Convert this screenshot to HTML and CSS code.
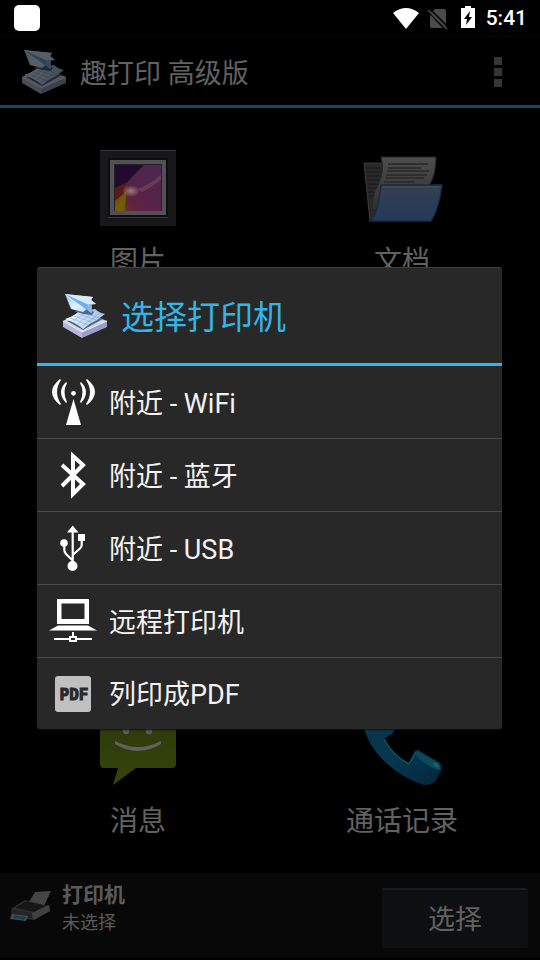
FILE: index.html
```html
<!DOCTYPE html>
<html lang="zh-CN">
<head>
<meta charset="utf-8">
<meta name="viewport" content="width=device-width, initial-scale=1">
<title>趣打印 高级版</title>
<link rel="stylesheet" href="styles.css">
</head>
<body>
<svg class="defs" aria-hidden="true">
  <defs>
    <linearGradient id="plane" x1="0" y1="0" x2="1" y2="1">
      <stop offset="0" stop-color="#8fbdf0"/><stop offset=".5" stop-color="#e4f3fd"/><stop offset="1" stop-color="#a9cff2"/>
    </linearGradient>
    <linearGradient id="sheet" x1="0" y1="0" x2="1" y2="0">
      <stop offset="0" stop-color="#eef6fc"/><stop offset="1" stop-color="#9cc3ea"/>
    </linearGradient>
    <symbol id="logo" viewBox="0 0 48 48">
      <path d="M2 29 21 19 46 29 21 41z" fill="#d3d7ec"/>
      <path d="M2 29 21 40V46L2 35z" fill="#b4b9d8"/>
      <path d="M46 29 21 40V46L46 35z" fill="#9a9fc8"/>
      <path d="M2 29 21 40 46 29" fill="none" stroke="#e9ecf8"/>
      <path d="M6 29 22 38 42 27 34 25z" fill="#5c6489"/>
      <path d="M4 27Q12 25 17 20L34 17Q38 21 44 22L36 28Q29 31 22 37Q14 30 4 27z" fill="url(#sheet)"/>
      <path d="M9 26 27 33M13 24 31 30M17 22 35 28M21 20 38 26M12 29 29 18M16 32 34 19M20 35 39 21" stroke="#7fa5cd" stroke-width=".5"/>
      <path d="M13 19 22 22 31 23 33 20 29 17z" fill="#4c6a90"/>
      <path d="M4 2 32 5 30 8 35 12 30 12 31 21 28 19 26 17 22 20 10 17z" fill="url(#plane)"/>
      <path d="M4 2 28 12 26 18z" fill="#78ace6"/>
      <path d="M4 2 32 5 30 8 35 12 28 13z" fill="#d5ebfb"/>
      <path d="M28 12 26 17 30 21 31 12z" fill="#8fb8e2"/>
      <path d="M4 2 22 19M7 8 16 18" stroke="#d9ecfb" stroke-width="1"/>
    </symbol>
  </defs>
</svg>

<div class="status">
  <span class="notice"></span>
  <svg class="wifi" viewBox="0 0 26 21" aria-hidden="true"><path d="M0 5Q13-5 26 5L13 21z" fill="#fff"/></svg>
  <svg class="sim" viewBox="0 0 20 21" aria-hidden="true">
    <path d="M7 1H16Q18 1 18 3V18Q18 20 16 20H4Q2 20 2 18V6z" fill="#4a4a4a"/>
    <path d="M1 4 18 22" stroke="#000" stroke-width="2"/><path d="M0 2 19 21" stroke="#4a4a4a" stroke-width="1.6"/><path d="M2 1 19 18" stroke="#000" stroke-width="1.6"/>
  </svg>
  <svg class="battery" viewBox="0 0 14 22" aria-hidden="true">
    <path d="M4 0H10V2H14V22H0V2H4z" fill="#fff"/><path d="M9 5 3 13H6L5 19 11 11H8z" fill="#000"/>
  </svg>
  <time>5:41</time>
</div>

<header class="bar">
  <svg class="logo" aria-hidden="true"><use href="#logo"/></svg>
  <h1>趣打印 高级版</h1>
  <button class="more" aria-label="更多选项"><i></i><i></i><i></i></button>
</header>

<main class="tiles">
  <a class="tile" href="#photos">
    <svg viewBox="0 0 76 76" aria-hidden="true">
      <defs>
        <linearGradient id="art" x1="0" y1="1" x2="1" y2="0">
          <stop offset="0" stop-color="#756209"/><stop offset=".22" stop-color="#613012"/><stop offset=".42" stop-color="#542347"/><stop offset="1" stop-color="#4c2752"/>
        </linearGradient>
        <radialGradient id="glow"><stop offset="0" stop-color="#a17c6d"/><stop offset="1" stop-color="#a17c6d" stop-opacity="0"/></radialGradient>
      </defs>
      <path d="M0 0H76V76H0z" fill="#18181b"/><path d="M0 .5H76" stroke="#343436"/>
      <path d="M8 8H68V68H8z" fill="#0e0e11"/><path d="M8 67.5H68" stroke="#3b3b3b"/>
      <path d="M10 10H66V65H10z" fill="#515153"/><path d="M14 14H62V61H14z" fill="#27212c"/>
      <path d="M15 15H61V61H15z" fill="url(#art)"/>
      <path d="M15 15H44L31 28 20 41 15 50z" fill="#210a31"/>
      <path d="M15 38 27 32 20 50 15 58z" fill="#591a17"/>
      <path d="M15 51 27 41 24 61H15z" fill="#756209" opacity=".8"/>
      <path d="M27 41Q37 33 44 43L61 61H26z" fill="#5f214c" opacity=".7"/>
      <path d="M38 39Q47 36 61 25V30Q50 38 42 42z" fill="#744456" opacity=".7"/>
      <ellipse cx="31" cy="41" rx="9" ry="6" fill="url(#glow)"/>
    </svg>
    <span>图片</span>
  </a>
  <a class="tile" href="#documents">
    <svg viewBox="0 0 76 76" aria-hidden="true">
      <defs><linearGradient id="folder" x1="0" y1="0" x2="0" y2="1"><stop offset="0" stop-color="#35404e"/><stop offset="1" stop-color="#223a5d"/></linearGradient>
      <linearGradient id="paper" x1="0" y1="0" x2="0" y2="1"><stop offset="0" stop-color="#4d4d4d"/><stop offset="1" stop-color="#303030"/></linearGradient></defs>
      <path d="M0 13H20V60L6 71z" fill="#292929" stroke="#393939"/>
      <path d="M2 18H17M2 22H17M3 26H16M3 30H15M3 34H14M4 38H13M4 42H12M4 46H11" stroke="#191919"/>
      <path d="M17 7H72Q72 24 66 34L20 60H8Q8 45 14 35 21 21 17 7z" fill="url(#paper)" stroke="#262626"/>
      <path d="M24 14H64M24 18H57M23 21H65M22 25H63M21 28H60M20 32H51" stroke="#292929" stroke-width="1.3"/>
      <path d="M17 35H78Q75 59 67 71H6Q14 65 17 35z" fill="url(#folder)" stroke="#172b46" stroke-width="1.4"/>
      <path d="M19 37H75" stroke="#465365"/>
    </svg>
    <span>文档</span>
  </a>
  <a class="tile" href="#messages">
    <svg viewBox="0 0 76 76" aria-hidden="true">
      <defs><linearGradient id="bubble" x1="0" y1="0" x2="0" y2="1"><stop offset=".2" stop-color="#2e3b0b"/><stop offset="1" stop-color="#35450b"/></linearGradient></defs>
      <path d="M4 4H72Q76 4 76 8V54Q76 58 72 58H36L13 75 18 58H4Q0 58 0 54V8Q0 4 4 4z" fill="url(#bubble)"/>
      <circle cx="26" cy="21" r="3.2" fill="#5c5c5c"/><circle cx="49" cy="21" r="3.2" fill="#5c5c5c"/>
      <path d="M15 31Q38 43 61 31V34Q38 48 15 34z" fill="#606060"/>
    </svg>
    <span>消息</span>
  </a>
  <a class="tile" href="#calls">
    <svg viewBox="0 0 76 76" aria-hidden="true">
      <defs><linearGradient id="phone" x1="0" y1="0" x2="1" y2="1"><stop offset="0" stop-color="#063448"/><stop offset=".5" stop-color="#07374f"/><stop offset="1" stop-color="#032640"/></linearGradient></defs>
      <path d="M2 4 22 2 31 19 29 23 20 29Q28 45 45 53L51 41Q53 39 56 41L76 53Q79 56 77 60L73 69Q69 75 60 75 37 68 18 49 5 35 0 19z" fill="url(#phone)"/>
      <path d="M53 41 75 53 77 60Q65 59 52 46z" fill="#0a4a5a"/>
      <path d="M20 29Q29 46 45 54L52 42" fill="none" stroke="#0c5060" stroke-width="1.6"/>
      <ellipse cx="72" cy="55" rx="3" ry="1.6" transform="rotate(35 72 55)" fill="#25646c"/>
    </svg>
    <span>通话记录</span>
  </a>
</main>

<footer class="printer">
  <svg class="device" viewBox="0 0 48 48" aria-hidden="true">
    <path d="M29 10 45 9 37 26 23 20z" fill="#454545"/>
    <path d="M5 27 19 18 43 24 44 29 27 38 5 34z" fill="#303030"/>
    <path d="M9 26 20 19 40 24 28 30z" fill="#171717"/>
    <path d="M5 27 26 31V37L5 33z" fill="#242424"/>
    <path d="M26 31 43 23 44 29 28 38z" fill="#414141"/>
    <path d="M6 32 22 34 20 39 4 37z" fill="#4a4f53"/><path d="M8 33 20 35 18 38 7 36z" fill="#173c5d"/><path d="M13 34 17 35 15 37 12 36z" fill="#23482d"/>
  </svg>
  <div class="state"><strong>打印机</strong><span>未选择</span></div>
  <button class="choose">选择</button>
</footer>

<div class="overlay">
  <section class="dialog" role="dialog" aria-labelledby="dialog-title">
    <div class="heading">
      <svg class="logo" aria-hidden="true"><use href="#logo"/></svg>
      <h2 id="dialog-title">选择打印机</h2>
    </div>
    <ul>
      <li><button>
        <svg viewBox="0 0 48 48" fill="#fff" aria-hidden="true">
          <circle cx="24.5" cy="15.3" r="2.4"/><path d="M24.5 21 32 47H17z"/>
          <path d="M17 4Q7 14 17 25L18 24Q13 14 18 5zM11 1Q-5 14 11 27L12 26Q4 14 12 2zM32 4Q42 14 32 25L31 24Q36 14 31 5zM38 1Q54 14 38 27L37 26Q45 14 37 2z"/>
        </svg><span>附近 - WiFi</span></button></li>
      <li><button>
        <svg viewBox="0 0 48 48" aria-hidden="true"><path d="M13 14 34 33 24 43V5L34 14 13 35" fill="none" stroke="#fff" stroke-width="4"/></svg><span>附近 - 蓝牙</span></button></li>
      <li><button>
        <svg viewBox="0 0 48 48" fill="#fff" aria-hidden="true">
          <path d="M23.700 1.500 29.500 8.500H18zM29 10H36V17H29z"/><circle cx="15" cy="19" r="3.800"/><circle cx="23.500" cy="42" r="5"/>
          <path d="M23.700 7V40M15.300 21V26Q15.300 28 17 30L23.700 36.500M32.700 16V21Q32.700 23 31 24.500L23.700 31" fill="none" stroke="#fff" stroke-width="2.200"/>
        </svg><span>附近 - USB</span></button></li>
      <li><button>
        <svg viewBox="0 0 48 48" fill="#fff" aria-hidden="true">
          <path fill-rule="evenodd" d="M8 2H40V27H8zM12.500 6.500V22H35.500V6.500zM9 28.500H39L48 33.500H0z"/>
          <path fill-rule="evenodd" d="M5 41H20V39H23V35H25V39H28V41H43V43H28V45H20V43H5zM22 41V43H26V41z"/>
        </svg><span>远程打印机</span></button></li>
      <li><button>
        <svg viewBox="0 0 48 48" aria-hidden="true"><rect x="6" y="6" width="36" height="36" rx="3" fill="#c0c0c0"/><text class="pdf" x="25" y="30" text-anchor="middle">PDF</text></svg><span>列印成PDF</span></button></li>
    </ul>
  </section>
</div>
</body>
</html>
```
FILE: styles.css
```css
* { box-sizing: border-box; }

body {
  margin: 0;
  min-height: 100vh;
  display: flex;
  flex-direction: column;
  position: relative;
  background: #000;
  color: #626262;
  font-family: Roboto, "Noto Sans CJK SC", sans-serif;
  font-size: 27px;
}

h1, h2 { margin: 0; font-size: 27px; font-weight: 400; }
svg { display: block; flex: none; overflow: visible; }
button { border: 0; padding: 0; background: none; color: inherit; font: inherit; }
.defs { position: absolute; width: 0; height: 0; }
.logo { width: 48px; height: 48px; }

.status {
  height: 36px;
  padding: 0 13px 0 14px;
  display: flex;
  align-items: center;
  color: #fff;
  font-size: 21px;
  font-weight: 500;
}
.notice { width: 26px; height: 26px; border-radius: 5px; background: #fff; margin-right: auto; }
.wifi { width: 26px; height: 21px; }
.sim { width: 20px; height: 21px; margin: 0 13px 0 9px; }
.battery { width: 14px; height: 22px; margin: 0 11px 2px 0; }

.bar {
  height: 72px;
  padding: 2px 38px 0 20px;
  display: flex;
  align-items: center;
  gap: 12px;
  border-top: 1px solid #080808;
  border-bottom: 3px solid #14485c;
}
.bar h1 { padding-bottom: 2px; }
.bar .logo { opacity: .4; }
.more { margin-left: auto; display: grid; gap: 3px; }
.more i { width: 8px; height: 8px; background: #353535; }

.tiles {
  flex: 1;
  padding: 42px 6px 35px;
  display: grid;
  grid-template-columns: 1fr 1fr;
  align-content: space-between;
}
.tile {
  display: flex;
  flex-direction: column;
  align-items: center;
  gap: 20px;
  color: inherit;
  font-size: 28px;
  line-height: 32px;
  text-decoration: none;
}
.tile svg { width: 76px; height: 76px; }

.printer {
  height: 87px;
  padding: 0 12px 0 6px;
  display: flex;
  align-items: flex-start;
  gap: 8px;
  background: #080808;
  border-bottom: 2px solid #000;
}
.device { width: 48px; height: 48px; margin-top: 9px; }
.state {
  flex: 1;
  display: flex;
  flex-direction: column;
  padding-top: 9px;
  font-size: 18px;
  line-height: 27px;
  color: #5a5a5a;
}
.state strong { font-size: 21px; }
.choose {
  width: 146px;
  height: 60px;
  margin-top: 15px;
  padding-bottom: 4px;
  background: #0e0f11;
  border-top: 2px solid #1b1b1b;
  border-radius: 2px;
}

.overlay {
  position: absolute;
  inset: 36px 0 0;
  padding: 0 38px 0 37px;
  display: flex;
  align-items: center;
}
.dialog {
  flex: 1;
  background: #282828;
  border-top: 1px solid #404040;
  border-radius: 3px;
  box-shadow: 0 1px 2px #111;
  color: #f3f3f3;
}
.heading {
  height: 98px;
  padding-left: 24px;
  display: flex;
  align-items: center;
  gap: 12px;
  border-bottom: 3px solid #33b5e5;
  color: #33b5e5;
}
.heading h2 { padding-bottom: 2px; font-size: 33px; }
.dialog ul { margin: 0; padding: 0; list-style: none; }
.dialog li + li { border-top: 1px solid #4a4a4a; }
.dialog li button {
  width: 100%;
  height: 72px;
  padding: 0 12px;
  display: flex;
  align-items: center;
  gap: 12px;
  text-align: left;
}
.dialog li:last-child button { height: 71px; }
.dialog li span { padding-bottom: 2px; }
.dialog li svg { width: 48px; height: 48px; }
.pdf {
  font: bold 16px "DejaVu Sans Mono", monospace;
  fill: #282828;
  stroke: #282828;
}
```
